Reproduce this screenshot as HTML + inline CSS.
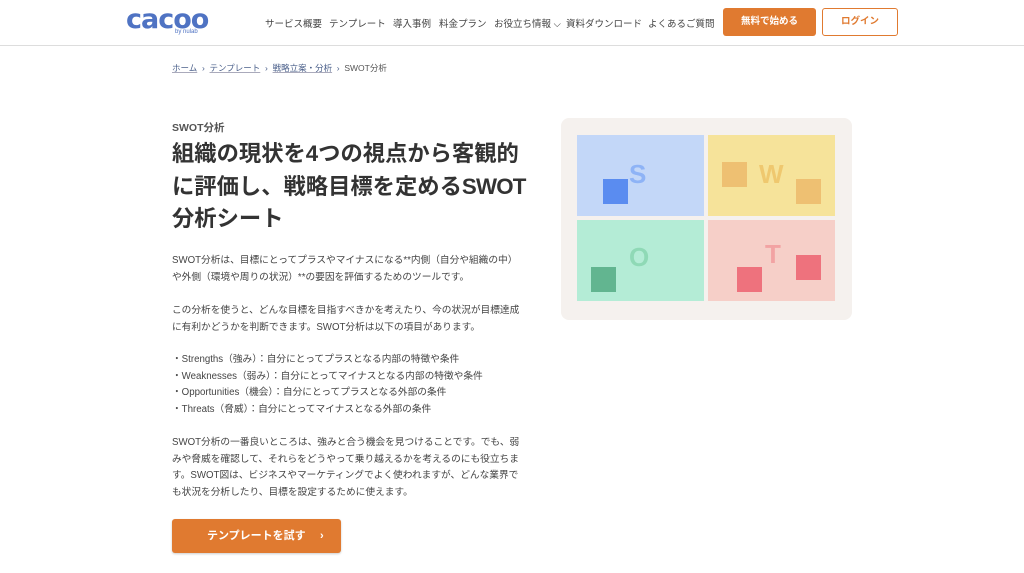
<!DOCTYPE html>
<html><head><meta charset="utf-8"><style>
*{margin:0;padding:0;box-sizing:border-box}
body{width:1024px;height:573px;overflow:hidden;background:#fff;font-family:"Liberation Sans","Noto Sans CJK JP",sans-serif;color:#333}
.hdr{position:absolute;left:0;top:0;width:1024px;height:46px;border-bottom:1px solid #ddd;background:#fff}
.logo{position:absolute;left:126px;top:4px;font-size:27px;font-weight:bold;color:#4f73c3;letter-spacing:-1px;font-family:"DejaVu Sans",sans-serif}
.by{position:absolute;left:175px;top:29px;font-size:6px;color:#4f73c3}
.nav{position:absolute;top:16px;font-size:9.5px;color:#444}
.btn1{position:absolute;left:723px;top:8px;width:93px;height:28px;background:#e07a30;border-radius:3px;color:#fff;font-size:9.5px;font-weight:bold;text-align:center;line-height:28px}
.btn2{position:absolute;left:822px;top:8px;width:76px;height:28px;border:1px solid #e07a30;border-radius:3px;color:#e07a30;font-size:9.5px;font-weight:bold;text-align:center;line-height:26px}
.bc{position:absolute;top:62px;font-size:8.5px;color:#4a5f8a}
.bc u{text-decoration:underline;text-decoration-color:#aab}
.t{position:absolute;left:172px}
p.b{font-size:9.7px;line-height:16.6px;color:#444;position:absolute;left:172px;width:350px}
.card{position:absolute;left:561px;top:118px;width:291px;height:202px;background:#f5f1ee;border-radius:8px}
.q{position:absolute;width:127px;height:81px}
.sq{position:absolute;width:25px;height:25px}
.L{position:absolute;font-size:26px;font-weight:bold;font-family:"Liberation Sans",sans-serif}
.cta{position:absolute;left:172px;top:519px;width:169px;height:34px;background:#e07a30;border-radius:3px;color:#fff;font-size:11px;font-weight:bold;line-height:34px;box-shadow:0 1px 2px rgba(0,0,0,.2)}
</style></head><body>
<div class="hdr">
<div class="logo">cacoo</div><div class="by">by nulab</div>
<div class="nav" style="left:265px">サービス概要</div>
<div class="nav" style="left:329px">テンプレート</div>
<div class="nav" style="left:393px">導入事例</div>
<div class="nav" style="left:439px">料金プラン</div>
<div class="nav" style="left:494px">お役立ち情報 ⌵</div>
<div class="nav" style="left:566px">資料ダウンロード</div>
<div class="nav" style="left:648px">よくあるご質問</div>
<div class="btn1">無料で始める</div>
<div class="btn2">ログイン</div>
</div>
<div class="bc" style="left:172px"><u>ホーム</u> &nbsp;›&nbsp; <u>テンプレート</u> &nbsp;›&nbsp; <u>戦略立案・分析</u> &nbsp;›&nbsp; <span style="color:#555">SWOT分析</span></div>
<div class="t" style="top:120px;font-size:10.5px;font-weight:bold;color:#555">SWOT分析</div>
<div class="t" style="top:138px;font-size:22.3px;font-weight:bold;line-height:32.5px;color:#333;width:365px">組織の現状を4つの視点から客観的<br>に評価し、戦略目標を定める<span style="letter-spacing:-0.8px">SWOT</span><br>分析シート</div>
<p class="b" style="top:253px">SWOT分析は、目標にとってプラスやマイナスになる**内側（自分や組織の中）や外側（環境や周りの状況）**の要因を評価するためのツールです。</p>
<p class="b" style="top:303px">この分析を使うと、どんな目標を目指すべきかを考えたり、今の状況が目標達成に有利かどうかを判断できます。SWOT分析は以下の項目があります。</p>
<p class="b" style="top:352px">・Strengths（強み）：自分にとってプラスとなる内部の特徴や条件<br>・Weaknesses（弱み）：自分にとってマイナスとなる内部の特徴や条件<br>・Opportunities（機会）：自分にとってプラスとなる外部の条件<br>・Threats（脅威）：自分にとってマイナスとなる外部の条件</p>
<p class="b" style="top:435px">SWOT分析の一番良いところは、強みと合う機会を見つけることです。でも、弱みや脅威を確認して、それらをどうやって乗り越えるかを考えるのにも役立ちます。SWOT図は、ビジネスやマーケティングでよく使われますが、どんな業界でも状況を分析したり、目標を設定するために使えます。</p>
<div class="cta"><span style="position:absolute;left:35px">テンプレートを試す</span><span style="position:absolute;left:148px">›</span></div>
<div class="card">
<div class="q" style="left:16px;top:17px;background:#c3d7f8"></div>
<div class="q" style="left:147px;top:17px;background:#f6e39a"></div>
<div class="q" style="left:16px;top:102px;background:#b4ecd6"></div>
<div class="q" style="left:147px;top:102px;background:#f6cfc8"></div>
<div class="sq" style="left:42px;top:61px;background:#5a8cf0"></div>
<div class="L" style="left:68px;top:41px;color:#8eb3f6">S</div>
<div class="sq" style="left:161px;top:44px;background:#eec072"></div>
<div class="sq" style="left:235px;top:61px;background:#eec072"></div>
<div class="L" style="left:198px;top:41px;color:#efc86f">W</div>
<div class="sq" style="left:30px;top:149px;background:#62b590"></div>
<div class="L" style="left:68px;top:124px;color:#8fd9b6">O</div>
<div class="sq" style="left:176px;top:149px;background:#ee727d"></div>
<div class="sq" style="left:235px;top:137px;background:#ee727d"></div>
<div class="L" style="left:204px;top:121px;color:#f2a3a3">T</div>
</div>
</body></html>
